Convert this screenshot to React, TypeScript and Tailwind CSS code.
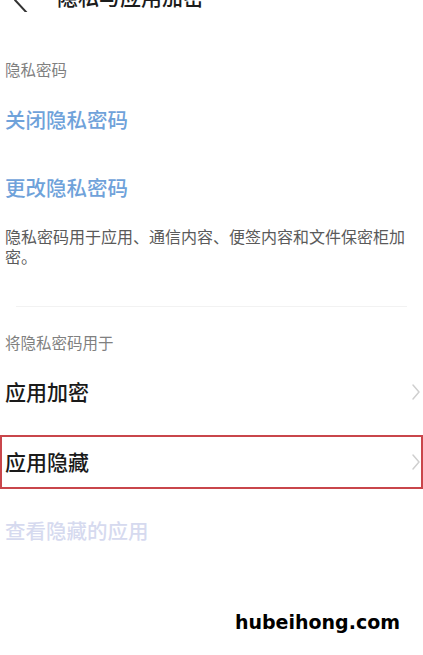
import React from "react";

const CJK = "font-['Noto_Sans_CJK_SC','Noto_Sans',sans-serif]";

const Chevron = () => (
  <svg width="10" height="18" viewBox="0 0 10 18" className="shrink-0">
    <polyline
      points="2,2 8,9 2,16"
      fill="none"
      stroke="#cfcfcf"
      strokeWidth="1.5"
      strokeLinecap="round"
      strokeLinejoin="round"
    />
  </svg>
);

const App: React.FC = () => {
  return (
    <div className={`w-[423px] h-[655px] overflow-hidden bg-white ${CJK}`}>
      {/* header, mostly scrolled out of view */}
      <div className="-mt-[24px] h-[40px] flex items-center">
        <svg width="20" height="32" viewBox="0 0 20 32" className="ml-[11px] shrink-0">
          <polyline
            points="16,4 4,20 16,33"
            fill="none"
            stroke="#333"
            strokeWidth="2"
            strokeLinecap="round"
            strokeLinejoin="round"
          />
        </svg>
        <span className="ml-[26px] text-[21px] font-medium text-[#1c1c1c] leading-none">
          隐私与应用加密
        </span>
      </div>

      <div className="mt-[39px] h-[30px] flex items-center pl-[5px] text-[15.5px] text-[#808080]">
        隐私密码
      </div>

      <div className="mt-[10px] h-[48px] flex items-center pl-[5px] text-[20.5px] font-medium text-[#6fa2da]">
        关闭隐私密码
      </div>

      <div className="mt-[20px] h-[48px] flex items-center pl-[5px] text-[20.5px] font-medium text-[#6fa2da]">
        更改隐私密码
      </div>

      <p className="mt-[15px] pl-[5px] pr-[18px] text-[16px] leading-[20px] text-[#5a5a5a]">
        隐私密码用于应用、通信内容、便签内容和文件保密柜加密。
      </p>

      <div className="mt-[40px] mx-[16px] h-px bg-[#f2f2f2]" />

      <div className="mt-[21px] h-[30px] flex items-center pl-[5px] text-[15.5px] text-[#808080]">
        将隐私密码用于
      </div>

      <div className="mt-[10px] h-[48px] flex items-center justify-between pl-[5px] pr-[2px] text-[21px] font-medium text-[#1a1a1a]">
        <span>应用加密</span>
        <Chevron />
      </div>

      <div className="mt-[19px] h-[54px] flex items-center justify-between border-2 border-[#c9464b] pl-[3px] pr-0 text-[21px] font-medium text-[#1a1a1a]">
        <span>应用隐藏</span>
        <Chevron />
      </div>

      <div className="mt-[21px] h-[40px] flex items-center pl-[5px] text-[20.5px] font-medium text-[#d6daef]">
        查看隐藏的应用
      </div>

      <div className="mt-[60px] h-[24px] flex justify-end pr-[23px]">
        <span className="font-['DejaVu_Sans',sans-serif] font-bold text-[19px] leading-[24px] text-black">
          hubeihong.com
        </span>
      </div>
    </div>
  );
};

export default App;
